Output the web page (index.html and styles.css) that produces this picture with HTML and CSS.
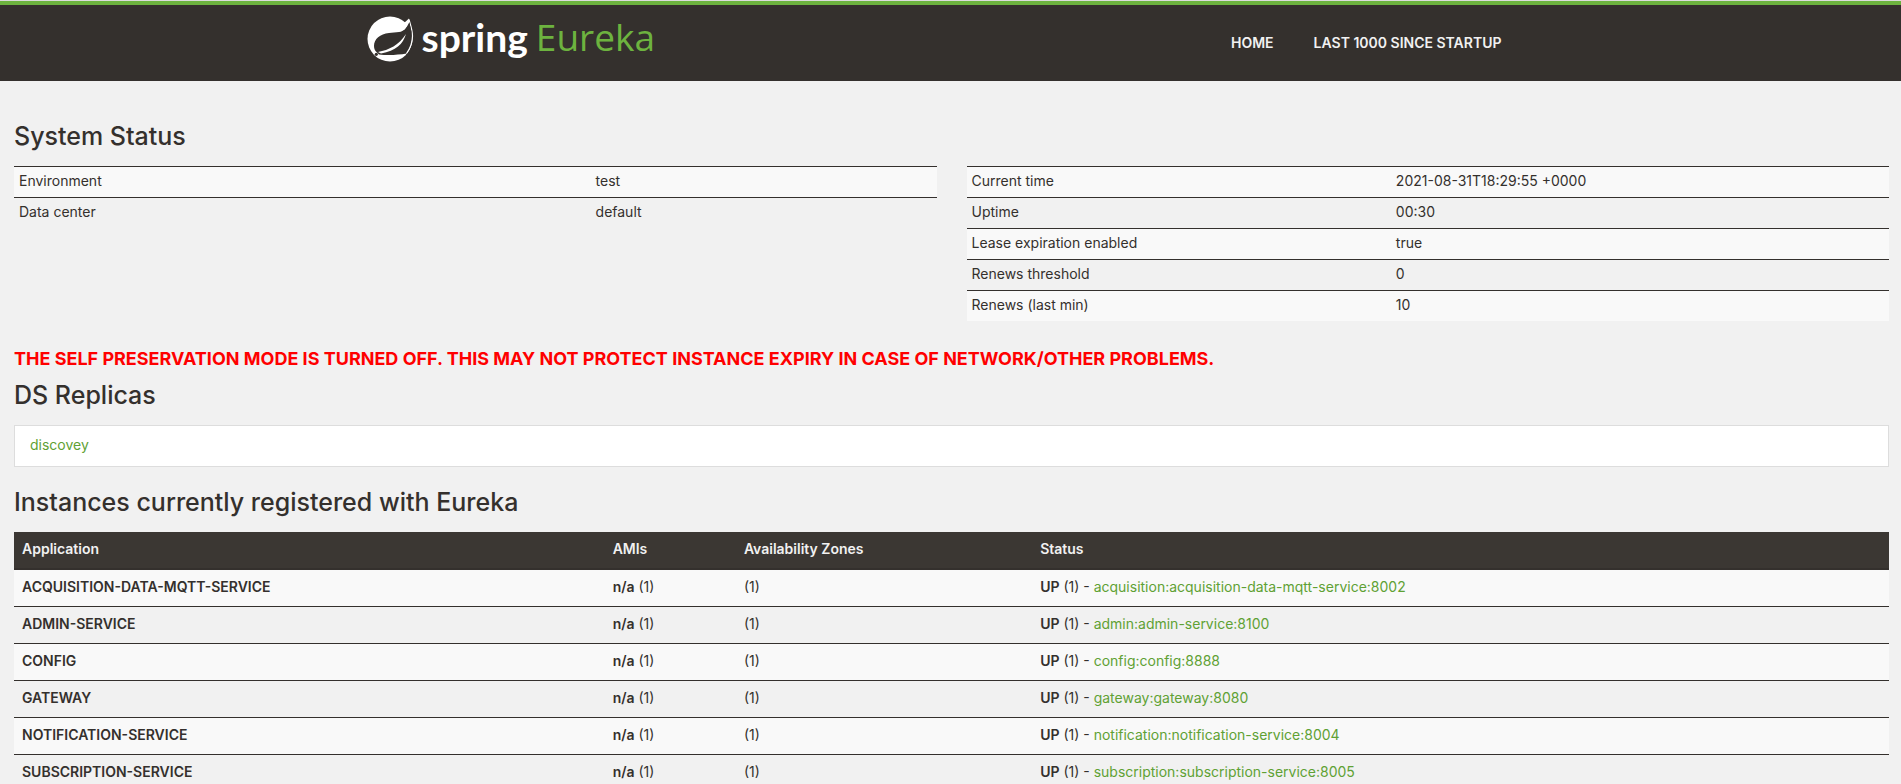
FILE: index.html
```html
<!DOCTYPE html>
<html lang="en">
<head>
<meta charset="utf-8">
<title>Eureka</title>
<link rel="stylesheet" href="styles.css">
</head>
<body>
<header class="navbar">
  <div class="navbar-inner">
    <a class="brand" href="#">
      <svg class="brand-mark" viewBox="0 0 48 46" aria-hidden="true">
        <circle cx="24" cy="23" r="22.500" fill="#fff"/>
        <path d="M43 3C46 12 48 20 46 28C45 32 43 35 40 39L50 39L50 0L44 0Z" fill="#34302d"/>
        <path d="M43 3.500C41 12 38 15.500 33 16C30 16.600 26 16.500 23 17C14 18 8 23 8 30C8 33 9 35 11 36.500L13 38.500C22 39.500 32 39 40.500 37.500C45.500 31 46.500 24 46 18C45.600 12 44 8 43 3.500Z" fill="#34302d"/>
        <path d="M43 3.500C44.500 9 46.500 14 46.500 20C46.500 27 44.500 32 40.500 37.500" fill="none" stroke="#fff" stroke-width="1.200"/>
        <path d="M38 7L43 2.500L43.500 6C42 9 40 12 38 14Z" fill="#fff"/>
        <path d="M43.300 6C42 12 39 15.500 35 16.500L40 20L45 22L45.500 16Z" fill="#34302d"/>
        <path d="M12 36C23 34 33 29 40 18C37 28 30 35 15 37.500Z" fill="#fff"/>
        <circle cx="10.300" cy="38.300" r="1.600" fill="#34302d"/>
      </svg>
      <span class="brand-spring">spring</span>
      <span class="brand-eureka">Eureka</span>
    </a>
    <nav class="nav">
      <a href="#">HOME</a>
      <a href="#">LAST 1000 SINCE STARTUP</a>
    </nav>
  </div>
</header>
<main class="content">
  <h1>System Status</h1>
  <div class="status-grid">
    <table class="status-table environment">
      <tbody>
        <tr><td>Environment</td><td>test</td></tr>
        <tr><td>Data center</td><td>default</td></tr>
      </tbody>
    </table>
    <table class="status-table runtime">
      <tbody>
        <tr><td>Current time</td><td>2021-08-31T18:29:55 +0000</td></tr>
        <tr><td>Uptime</td><td>00:30</td></tr>
        <tr><td>Lease expiration enabled</td><td>true</td></tr>
        <tr><td>Renews threshold</td><td>0</td></tr>
        <tr><td>Renews (last min)</td><td>10</td></tr>
      </tbody>
    </table>
  </div>
  <h4 class="warning">THE SELF PRESERVATION MODE IS TURNED OFF. THIS MAY NOT PROTECT INSTANCE EXPIRY IN CASE OF NETWORK/OTHER PROBLEMS.</h4>
  <h1>DS Replicas</h1>
  <ul class="replicas">
    <li><a href="#">discovey</a></li>
  </ul>
  <h1>Instances currently registered with Eureka</h1>
  <table class="instances">
    <thead>
      <tr><th>Application</th><th>AMIs</th><th>Availability Zones</th><th>Status</th></tr>
    </thead>
    <tbody>
      <tr><td><b>ACQUISITION-DATA-MQTT-SERVICE</b></td><td><b>n/a</b> (1)</td><td>(1)</td><td><b>UP</b> (1) - <a href="#">acquisition:acquisition-data-mqtt-service:8002</a></td></tr>
      <tr><td><b>ADMIN-SERVICE</b></td><td><b>n/a</b> (1)</td><td>(1)</td><td><b>UP</b> (1) - <a href="#">admin:admin-service:8100</a></td></tr>
      <tr><td><b>CONFIG</b></td><td><b>n/a</b> (1)</td><td>(1)</td><td><b>UP</b> (1) - <a href="#">config:config:8888</a></td></tr>
      <tr><td><b>GATEWAY</b></td><td><b>n/a</b> (1)</td><td>(1)</td><td><b>UP</b> (1) - <a href="#">gateway:gateway:8080</a></td></tr>
      <tr><td><b>NOTIFICATION-SERVICE</b></td><td><b>n/a</b> (1)</td><td>(1)</td><td><b>UP</b> (1) - <a href="#">notification:notification-service:8004</a></td></tr>
      <tr><td><b>SUBSCRIPTION-SERVICE</b></td><td><b>n/a</b> (1)</td><td>(1)</td><td><b>UP</b> (1) - <a href="#">subscription:subscription-service:8005</a></td></tr>
    </tbody>
  </table>
</main>
</body>
</html>
```
FILE: styles.css
```css
* {
  box-sizing: border-box;
}

html {
  overflow-x: hidden;
  scrollbar-width: none;
}

body {
  margin: 0;
  border-top: 1px solid #dcdcdc;
  background: #f1f1f1;
  color: #34302d;
  font: 14px/20px Inter, "Open Sans", sans-serif;
}

a {
  color: #5fa134;
  text-decoration: none;
}

.navbar {
  border-top: 4px solid #6db33f;
  background: #34302d;
}

.navbar-inner {
  display: flex;
  justify-content: space-between;
  align-items: center;
  max-width: 1170px;
  min-height: 76px;
  margin: 0 auto;
}

.brand {
  display: flex;
  align-items: center;
  padding-bottom: 8px;
  line-height: 48px;
}

.brand-mark {
  width: 48px;
  height: 46px;
}

.brand-spring {
  margin: 0 8px;
  padding-bottom: 4px;
  color: #fff;
  font-family: Lato, sans-serif;
  font-size: 39px;
  font-weight: 700;
}

.brand-eureka {
  padding-bottom: 4px;
  color: #6db33f;
  font-family: "Open Sans", sans-serif;
  font-size: 37px;
}

.nav {
  display: flex;
  gap: 40px;
  padding-right: 34px;
}

.nav a {
  color: #f1f1f1;
  font-weight: 600;
}

.content {
  padding: 41px 12px 0 14px;
}

h1 {
  margin: 0 0 16px;
  font-size: 25px;
  font-weight: 500;
  line-height: 28px;
}

table {
  width: 100%;
  border-spacing: 0;
  table-layout: fixed;
}

td,
th {
  text-align: left;
}

tbody tr:nth-child(odd) {
  background: #f9f9f9;
}

.status-grid {
  display: grid;
  grid-template-columns: 1fr 1fr;
  align-items: start;
  gap: 30px;
}

.status-table td {
  padding: 4px 5px 6px;
  border-top: 1px solid #34302d;
}

.environment td:first-child {
  width: 62.5%;
}

.runtime td:first-child {
  width: 46%;
}

.warning {
  margin: 28px 0 12px;
  color: #f00;
  font-size: 18px;
  font-weight: 700;
  line-height: 20px;
}

.replicas {
  margin: 0 0 21px;
  padding: 0;
  list-style: none;
}

.replicas li {
  padding: 9px 15px 11px;
  border: 1px solid #ddd;
  background: #fff;
}

b,
.instances th {
  font-weight: 600;
}

.instances th {
  padding: 7px 8px 9px;
  border-bottom: 2px solid #34302d;
  background: #3b3733;
  color: #f1f1f1;
}

.instances th:nth-child(1) {
  width: 31.5%;
}

.instances th:nth-child(2) {
  width: 7%;
}

.instances th:nth-child(3) {
  width: 15.8%;
}

.instances td {
  padding: 7px 8px 9px;
  border-bottom: 1px solid #34302d;
}
```
